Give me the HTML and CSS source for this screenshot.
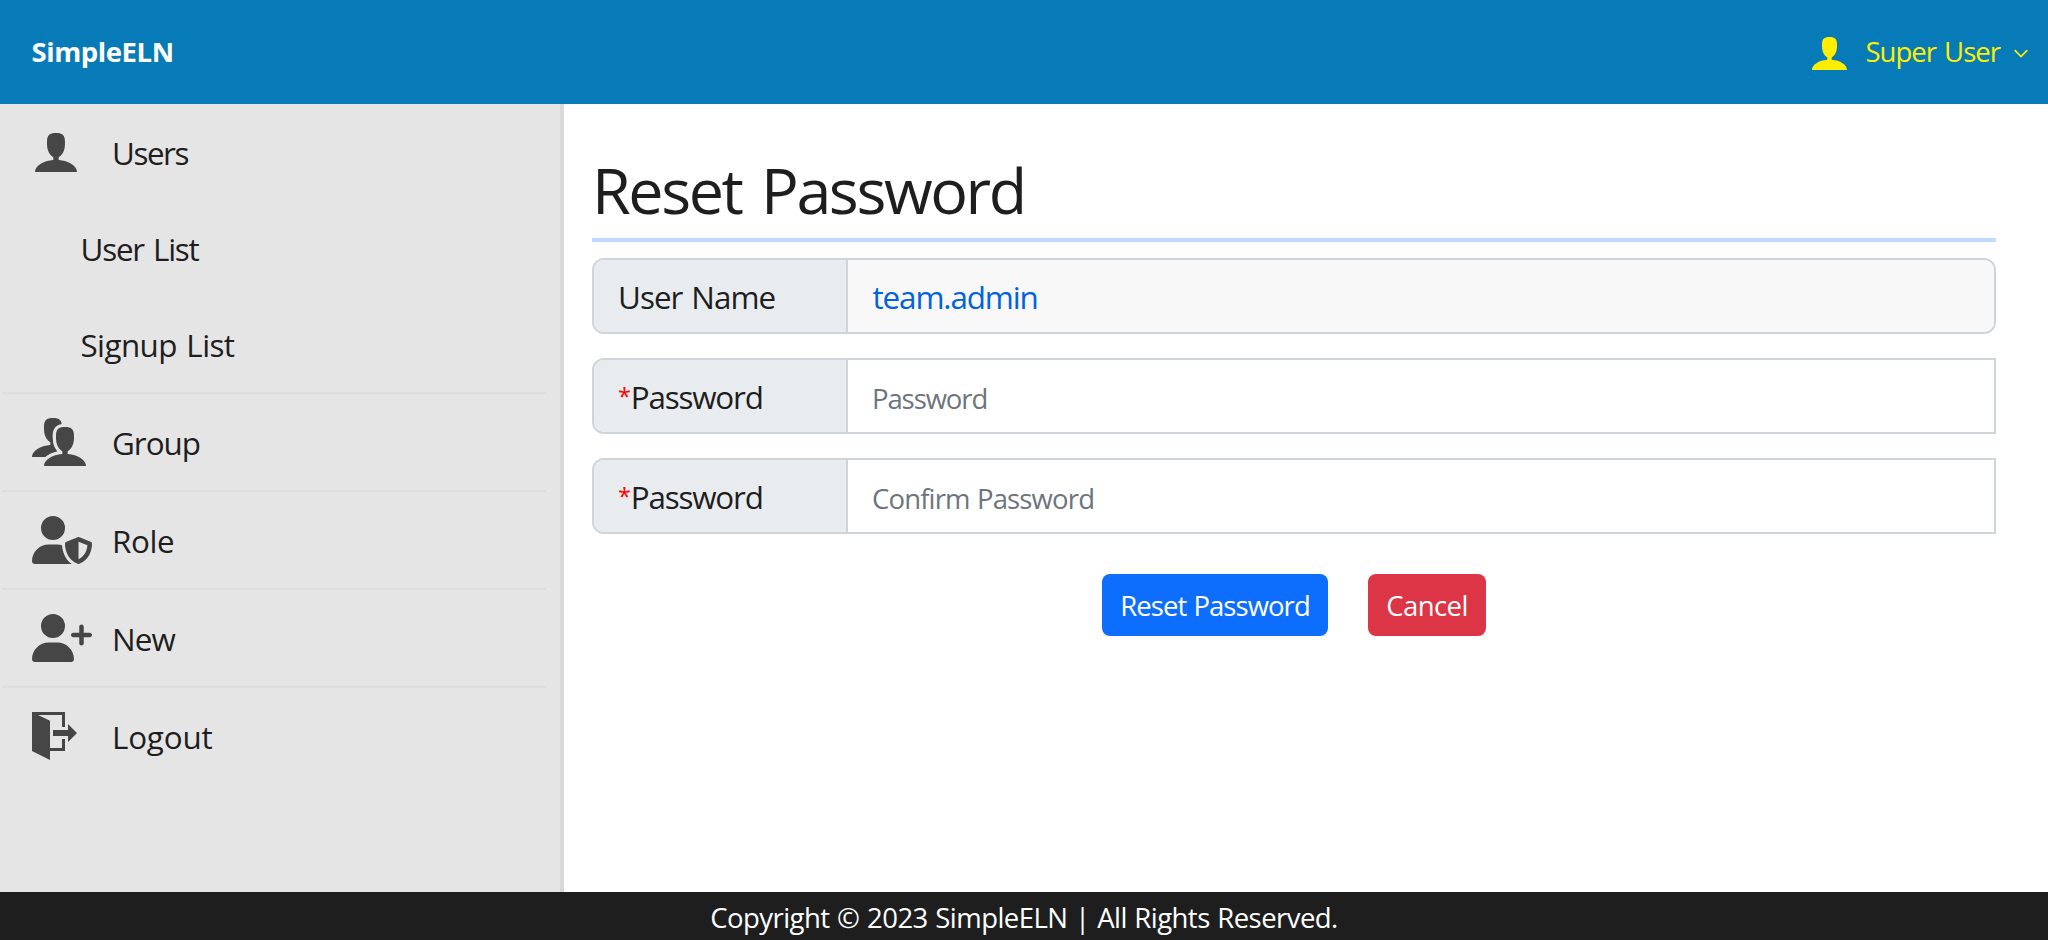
FILE: index.html
```html
<!DOCTYPE html>
<html lang="en">
<head>
<meta charset="utf-8">
<title>SimpleELN</title>
<link rel="stylesheet" href="styles.css">
</head>
<body>
<svg class="defs" width="0" height="0">
  <defs>
    <path id="person" d="M36 26C36 7 43 0 63 0S90 7 90 26C91 52 83 65 71 73V81C101 83 126 99 126 117H0C0 99 25 83 55 81V73C43 65 35 52 36 26Z"/>
  </defs>
</svg>
<header class="topbar">
  <span class="brand">SimpleELN</span>
  <div class="account">
    <svg class="account-icon" viewBox="0 0 126 117" preserveAspectRatio="none"><use href="#person"/></svg>
    <span class="account-name">Super User</span>
    <svg class="chevron" viewBox="0 0 14 9"><path d="M.7 1.2 7 7.5 13.3 1.2"/></svg>
  </div>
</header>
<div class="body">
  <nav class="sidebar">
    <a class="item first"><svg viewBox="0 0 60 48"><use href="#person" transform="translate(3 5) scale(.3333)"/></svg><span class="t-users">Users</span></a>
    <a class="sub t-userlist">User List</a>
    <a class="sub t-signup">Signup List</a>
    <a class="item"><svg viewBox="0 0 60 48"><use href="#person" transform="scale(.3333)"/><use class="gap" href="#person" transform="translate(12 9) scale(.3333)"/><use href="#person" transform="translate(12 9) scale(.3333)"/></svg><span class="t-group">Group</span></a>
    <a class="item"><svg viewBox="0 0 640 512"><path d="M224 256A128 128 0 1 0 224 0a128 128 0 1 0 0 256zm-45.7 48C79.8 304 0 383.8 0 482.3C0 498.7 13.3 512 29.7 512H418.3c1.8 0 3.5-.2 5.3-.5c-76.3-55.1-99.8-141-103.1-200.2c-16.1-4.8-33.1-7.3-50.7-7.3H178.3zm308.8-78.3l-120 48C358 277.4 352 286.2 352 296c0 63.3 25.9 168.8 134.8 214.2c5.9 2.5 12.6 2.5 18.5 0C614.1 464.8 640 359.3 640 296c0-9.8-6-18.6-15.1-22.3l-120-48c-5.7-2.3-12.1-2.3-17.8 0zM591.4 312c-3.9 50.7-27.2 116.7-95.4 149.7V273.8L591.4 312z"/></svg><span class="t-role">Role</span></a>
    <a class="item"><svg viewBox="0 0 640 512"><path d="M96 128a128 128 0 1 1 256 0A128 128 0 1 1 96 128zM0 482.3C0 383.8 79.8 304 178.3 304h91.4C368.2 304 448 383.8 448 482.3c0 16.4-13.3 29.7-29.7 29.7H29.7C13.3 512 0 498.7 0 482.3zM504 312V248H440c-13.3 0-24-10.7-24-24s10.7-24 24-24h64V136c0-13.3 10.7-24 24-24s24 10.7 24 24v64h64c13.3 0 24 10.7 24 24s-10.7 24-24 24H552v64c0 13.3-10.7 24-24 24s-24-10.7-24-24z"/></svg><span class="t-new">New</span></a>
    <a class="item"><svg viewBox="0 0 180 144"><path d="M0 0H99V45H90V9H18L54 26V108H90V81H99V117H54V144L0 117ZM63 54H108V36L135 63 108 90V72H63Z"/></svg><span class="t-logout">Logout</span></a>
  </nav>
  <main class="content">
    <h1>Reset Password</h1>
    <div class="field readonly"><label><span class="t-label-user">User Name</span></label><div class="control">team.admin</div></div>
    <div class="field"><label><i>*</i><span class="t-label-pass">Password</span></label><input class="control" type="password" placeholder="Password"></div>
    <div class="field"><label><i>*</i><span class="t-label-pass">Password</span></label><input class="control confirm" type="password" placeholder="Confirm Password"></div>
    <div class="actions"><button class="btn primary">Reset Password</button><button class="btn danger">Cancel</button></div>
  </main>
</div>
<footer class="footer">Copyright © 2023 SimpleELN | All Rights Reserved.</footer>
</body>
</html>
```
FILE: styles.css
```css
* { box-sizing: border-box; }

body {
  margin: 0;
  height: 940px;
  display: flex;
  flex-direction: column;
  overflow: hidden;
  font-family: "Open Sans", "Noto Sans", sans-serif;
  font-size: 31.4px;
  color: #1e1e1e;
  background: #fff;
}

svg { flex: none; display: block; }
.defs { position: absolute; }

/* Header */
.topbar {
  height: 104px;
  flex: none;
  display: flex;
  align-items: center;
  justify-content: space-between;
  padding: 0 20px 1px 31.5px;
  background: #077bb8;
  font-size: 27.5px;
}
.brand { color: #fff; font-weight: 700; letter-spacing: -.42px; }
.account { display: flex; align-items: center; color: #ffee00; }
.account-icon { width: 35px; height: 33px; fill: #ffee00; margin-right: 18.5px; margin-top: 4px; }
.account-name { width: 148.5px; white-space: nowrap; letter-spacing: -1px; word-spacing: 2px; }
.chevron { width: 14px; height: 9px; margin-top: 3px; fill: none; stroke: #ffee00; stroke-width: 1.7; }

/* Sidebar */
.body { flex: 1; display: flex; min-height: 0; }
.sidebar {
  width: 564px;
  flex: none;
  background: #e5e5e5;
  border-right: 4px solid #d9d9d9;
  padding: 0 14px 0 0;
}
.item, .sub { display: flex; align-items: center; height: 96px; }
.item {
  height: 98px;
  padding-left: 30px;
  margin-left: 2px;
  border-top: 2px solid #dedede;
}
.item.first { height: 96px; border-top: 0; }
.item svg { width: 60px; height: 48px; margin-right: 20px; fill: #464646; }
.item .gap { stroke: #e5e5e5; stroke-width: 20; fill: #e5e5e5; }
.sub { padding-left: 80.5px; }
.t-users { letter-spacing: -1.45px; }
.t-userlist { letter-spacing: -1.2px; word-spacing: 2px; }
.t-signup { letter-spacing: -.6px; word-spacing: 2px; }
.t-group { letter-spacing: -1px; }
.t-role { letter-spacing: -.4px; }
.t-new { letter-spacing: -.86px; }
.t-logout { letter-spacing: -.2px; }

/* Content */
.content { flex: 1; padding: 48px 52px 0 28px; }
h1 {
  margin: 0 0 16px;
  height: 90px;
  border-bottom: 4px solid #c1daff;
  font-size: 62.8px;
  font-weight: 400;
  line-height: 76px;
  letter-spacing: -2.4px;
  word-spacing: 5.5px;
}
.field {
  display: flex;
  height: 76px;
  margin-bottom: 24px;
  border: 2px solid #ced4da;
  border-radius: 12px 0 0 12px;
  overflow: hidden;
}
.field label {
  width: 254px;
  flex: none;
  display: flex;
  align-items: center;
  padding-left: 24px;
  background: #e9ecef;
  border-right: 2px solid #ced4da;
}
.field i { width: 13px; font-size: 23.5px; line-height: 32px; margin-right: -.3px; font-style: normal; color: #ff0000; }
.t-label-user { letter-spacing: -.95px; word-spacing: 1.5px; }
.t-label-pass { letter-spacing: -1.19px; }
.control {
  flex: 1;
  min-width: 0;
  border: 0;
  outline: 0;
  padding: 4px 24px 0;
  background: #fff;
  font: 400 27.5px "Open Sans", "Noto Sans", sans-serif;
  letter-spacing: -1.1px;
}
.control.confirm { letter-spacing: -.85px; word-spacing: 1px; }
.control::placeholder { color: #6c757d; opacity: 1; }
.readonly { border-radius: 12px; }
.readonly .control {
  padding: 0 24.5px;
  font-size: 31.4px;
  line-height: 73px;
  letter-spacing: -1.12px;
  color: #0062dd;
  background: #f8f8f8;
}
.actions { display: flex; justify-content: center; gap: 40px; padding-top: 16px; }
.btn {
  height: 62px;
  padding: 1px 0 0;
  border: 0;
  border-radius: 8px;
  font: 400 27.5px "Open Sans", "Noto Sans", sans-serif;
  color: #fff;
}
.primary { width: 226px; background: #0d6efd; letter-spacing: -.95px; word-spacing: 1px; }
.danger { width: 118px; background: #dc3545; letter-spacing: -.58px; }

/* Footer */
.footer {
  height: 48px;
  flex: none;
  text-align: center;
  line-height: 51px;
  font-size: 27.5px;
  letter-spacing: -.55px;
  word-spacing: 1px;
  color: #fff;
  background: #1e1e1e;
}
```
